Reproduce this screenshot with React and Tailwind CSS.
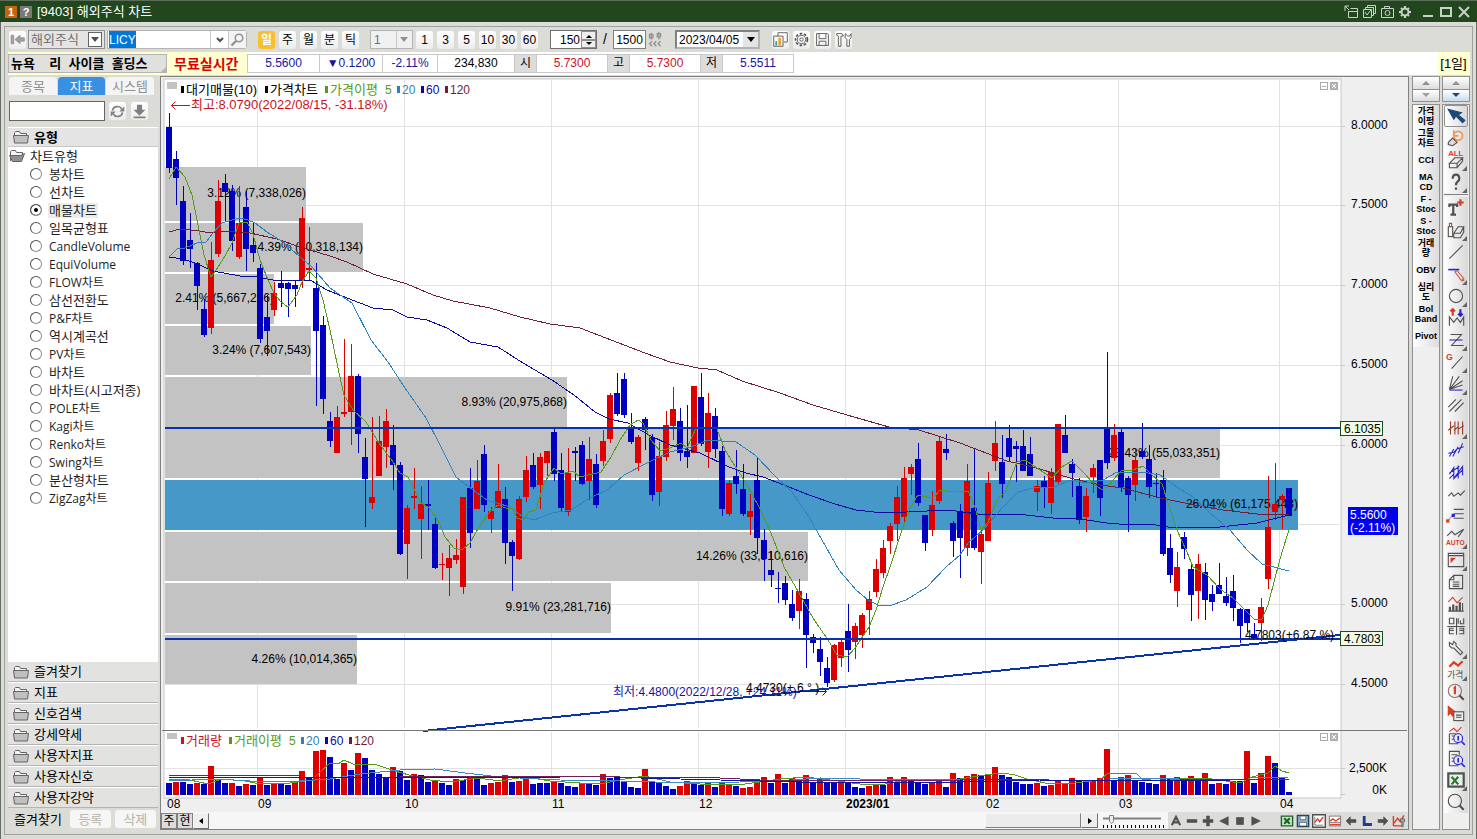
const FONT = "font-['Liberation_Sans','Noto_Sans_CJK_KR',sans-serif]"
const MALGUN = "font-['Open_Sans','Noto_Sans_CJK_KR',sans-serif]"
const btn = 'flex items-center justify-center w-[17px] h-[18px] rounded-[3px] bg-gradient-to-b from-white to-[#ececec] text-[12px] leading-none text-black flex-shrink-0'

const TYPES = [
  '봉차트', '선차트', '매물차트', '일목균형표', 'CandleVolume', 'EquiVolume', 'FLOW차트', '삼선전환도', 'P&F차트',
  '역시계곡선', 'PV차트', '바차트', '바차트(시고저종)', 'POLE차트', 'Kagi차트', 'Renko차트', 'Swing차트', '분산형차트', 'ZigZag차트',
]
const GROUPS = ['즐겨찾기', '지표', '신호검색', '강세약세', '사용자지표', '사용자신호', '사용자강약']
const SHORTCUTS = [['가격', '이평'], ['그물', '차트'], ['CCI'], ['MA', 'CD'], ['F -', 'Stoc'], ['S -', 'Stoc'], ['거래', '량'], ['OBV'], ['심리', '도'], ['Bol', 'Band'], ['Pivot']]

// направление, high, верх тела, низ тела, low (координаты y)
const CANDLES = `B113,127,168,173 B151,159,178,205 B186,201,261,265 B213,240,249,268 B262,263,286,310 B299,309,335,337 R242,260,328,334 R180,201,254,257 B174,183,192,221 B185,191,241,251
R186,223,257,259 B191,207,249,271 B222,245,253,262 B264,268,339,343 B295,317,331,356 R282,293,310,316 B271,283,288,307 B282,283,289,317 B280,285,289,307 R207,218,280,288
R227,268,270,280 B263,288,331,406 B316,325,399,414 B412,421,441,447 R406,417,453,453 R339,412,414,417 R344,376,412,445 B374,376,434,453 B438,457,479,527 R417,497,503,509
R416,441,476,476 R409,421,447,468 B425,445,465,490 B462,465,554,555 R505,508,544,579 R468,496,498,509 R486,504,519,559 B480,504,506,530 B518,524,568,569 R553,564,565,580
R545,558,568,596 R539,555,560,564 R497,497,587,594 B468,488,533,548 R460,481,509,509 B445,454,505,512 R507,511,519,533 R464,491,508,508 B487,499,543,564 B540,542,556,591
R496,499,559,560 R456,470,497,502 B453,465,487,489 R453,457,485,509 R451,451,463,476 B429,432,474,481 B453,470,508,512 R448,473,512,516 B447,451,453,481 B441,445,484,485
R437,459,481,500 B454,464,505,508 R430,441,461,466 R393,395,439,443 B373,393,414,416 B373,379,415,418 B413,427,442,444 R435,437,463,471 B417,419,430,450 B434,437,495,501
R442,456,492,506 R411,425,457,461 R387,409,426,440 B408,421,453,461 B405,451,457,468 R386,386,453,453 B373,397,444,446 R393,413,452,468 B408,416,449,458 B446,451,509,516
R480,483,514,516 B450,476,484,494 B464,489,514,516 R494,511,517,535 B457,480,538,554 B529,540,559,581 B551,570,575,587 B572,588,589,603 B576,583,600,605 B590,604,618,621
R579,591,611,629 B593,599,635,668 B634,637,643,653 B637,649,662,676 B657,668,683,687 R644,645,680,682 R638,642,658,667 B604,631,650,672 R623,626,642,659 R613,615,635,648
R591,599,610,635 R559,569,592,597 R540,548,573,578 R523,526,541,554 R486,497,524,541 R467,478,517,523 R464,467,474,495 B443,459,503,506 B515,515,543,551 R491,505,530,536
R436,441,501,504 B434,449,453,460 B521,523,541,557 B504,512,538,578 R464,481,548,556 B448,508,548,550 R529,534,552,584 R472,483,541,541 R421,443,461,471 B435,462,484,498
B425,438,457,461 B441,446,449,482 B430,446,471,471 B437,454,476,476 R480,486,492,511 B476,481,487,508 R468,472,503,514 R424,424,482,484 B415,435,453,453 B459,464,473,497
B478,486,520,524 R488,496,517,532 R464,468,477,493 B460,460,498,516 B352,428,463,469 R424,435,458,461 B429,432,487,492 B476,478,495,532 R449,460,485,501 B423,451,457,459
B445,459,487,498 B473,483,484,497 B470,480,554,556 B534,548,575,583 R552,567,591,607 B532,537,549,559 B565,569,595,621 R554,564,591,619 B563,572,600,620 B585,594,602,611
B563,585,594,594 B577,596,603,606 B575,591,608,621 B608,609,626,643 B609,609,623,632 B623,634,638,638 R598,607,623,641 R476,527,579,589 R463,504,512,520 R494,496,500,529
B488,488,516,516`.split(/\s+/).map(s => ({ up: s[0] === 'R', v: s.slice(1).split(',').map(Number) }))

const VOLUMES = `B783 R782 B782 B784 R783 B784 R766 B780 B783 R783 B786 R784 B785 R777 B785 R783 B783 B785 R782 R771
B777 R751 R750 B757 B779 R763 B770 R753 B758 B770 B774 B778 R767 B771 B780 R774 B775 B782 R780 B783
B785 R779 B780 R777 B777 B785 R783 R782 R775 B782 R781 R778 B784 B783 B783 R782 B783 B786 B787 R783
B784 B785 R774 B778 B777 B782 B787 B788 R769 B782 B783 B786 B789 R786 R781 B782 B785 R782 B787 R782
R784 B786 R788 R787 R781 R777 B783 R774 B783 R778 B780 R775 B783 R778 B782 B782 R782 B782 B787 B788
R786 R785 B785 R777 B782 R777 B781 B782 B784 R783 R781 B787 R773 B778 R776 R774 B775 R774 R767 B775
B777 B782 B784 B784 R783 B786 R785 R781 R784 R778 B780 B781 R780 R778 R749 B780 R777 R775 B780 B782
B783 B784 R775 B778 R777 B780 R776 B780 R773 B784 R783 B784 R781 B781 R751 B783 R773 R756 B763 B778
B792`.split(/\s+/)

// 매물대
const BLOCKS = [
  [167, 221, 306, '3.12% (7,338,026)'],
  [223, 272, 363, '4.39% (10,318,134)'],
  [274, 324, 274, '2.41% (5,667,266)'],
  [326, 375, 311, '3.24% (7,607,543)'],
  [377, 428, 567, '8.93% (20,975,868)'],
  [429, 478, 1220, '23.43% (55,033,351)'],
  [480, 530, 1298, '26.04% (61,175,443)'],
  [532, 581, 808, '14.26% (33,510,616)'],
  [583, 633, 611, '9.91% (23,281,716)'],
  [635, 684, 357, '4.26% (10,014,365)'],
]

const MA5 = '169,179 176,167 185,177 192,195 197,220 204,255 211,277 218,267 225,256 232,243 239,223 247,222 253,234 260,260 268,280 274,293 281,302 288,307 297,295 302,282 309,271 316,278 323,300 330,330 338,368 344,395 353,410 366,422 379,443 393,462 400,473 408,477 416,493 421,503 428,507 437,518 445,537 454,548 462,550 470,543 479,527 491,510 498,505 506,508 512,508 517,518 523,520 529,512 536,510 544,483 554,468 561,474 573,471 580,477 601,472 611,457 620,440 630,425 638,420 643,423 651,440 660,451 670,448 681,443 687,448 696,428 717,429 725,450 733,463 746,483 759,507 771,533 784,567 799,593 813,618 828,640 837,655 847,657 855,648 869,627 876,610 883,587 890,567 902,530 910,508 918,495 927,497 933,498 940,490 953,492 968,491 975,507 981,530 988,522 998,498 1005,493 1017,462 1025,460 1037,468 1052,478 1062,467 1072,461 1083,472 1093,483 1102,490 1107,487 1121,471 1133,470 1143,466 1150,473 1162,484 1168,503 1177,530 1187,552 1193,567 1207,575 1220,589 1233,598 1243,608 1254,619 1262,619 1268,605 1275,578 1282,552 1289,530'
const MA20 = '169,257 177,249 185,248 197,243 206,242 213,233 222,223 232,220 240,218 248,220 255,223 267,232 283,242 300,257 312,267 330,288 352,303 371,340 388,362 405,388 426,418 439,443 456,477 473,490 487,500 510,507 523,517 534,520 552,513 571,510 590,498 607,490 624,475 649,462 670,452 691,447 708,440 736,442 755,455 776,477 792,492 809,517 822,540 839,570 856,590 868,600 878,605 889,606 906,600 927,587 946,567 960,555 968,543 983,530 1003,507 1018,492 1037,487 1053,488 1070,480 1087,483 1103,480 1117,472 1142,472 1160,475 1177,487 1193,497 1210,513 1230,530 1247,550 1262,564 1289,571'
const MA60 = '169,257 183,259 195,263 213,271 240,276 257,277 273,280 310,280 327,290 347,298 373,308 393,310 407,317 427,320 447,328 470,342 498,347 523,363 552,380 574,395 595,412 609,419 628,423 649,435 670,445 700,453 729,467 746,473 763,477 784,485 809,495 835,504 856,510 883,513 906,512 948,510 978,514 1017,514 1053,518 1080,519 1107,523 1130,525 1150,524 1168,527 1220,527 1257,523 1289,515'
const MA120 = '169,232 180,229 200,231 210,233 227,231 250,233 277,239 300,247 330,256 347,262 373,274 407,284 433,295 453,301 490,308 520,317 550,324 580,328 611,340 645,353 670,362 698,368 717,370 742,381 780,393 813,405 847,415 889,427 919,430 960,443 973,448 1007,461 1033,467 1070,478 1100,485 1123,488 1160,498 1200,506 1223,510 1257,514 1289,514'

const VOL_MA = [
  ['#559a1a', '169,779 190,780 208,784 222,779 245,781 260,784 290,783 312,780 320,772 330,763 338,764 344,760 353,764 374,764 395,771 409,775 430,780 450,782 478,778 500,781 525,777 550,781 580,783 605,783 625,779 645,776 670,782 700,784 745,784 780,779 806,777 830,780 860,784 885,784 905,780 940,780 960,779 985,775 1002,773 1015,775 1027,779 1045,783 1075,783 1100,780 1108,773 1136,773 1142,779 1160,781 1190,778 1212,779 1240,783 1252,777 1268,773 1275,766 1282,771 1289,773'],
  ['#3a8ac8', '169,781 215,779 250,781 300,781 330,779 360,774 400,770 435,769 465,773 500,777 560,780 620,781 690,783 740,782 780,781 820,778 860,779 930,779 980,780 1040,779 1110,779 1180,778 1250,778 1289,777'],
  ['#1414a0', '169,777 270,777 330,777 410,778 470,777 560,778 640,778 720,780 800,782 860,782 960,782 1040,780 1130,780 1230,780 1289,779'],
  ['#6e1e5a', '169,775 225,775 300,776 400,776 520,776 620,777 700,777 760,780 850,780 960,780 1050,779 1180,779 1289,780'],
]

const GRID_X = [257, 404, 551, 698, 845, 985, 1118, 1279]
const PRICES = [['8.0000', 126], ['7.5000', 205], ['7.0000', 285], ['6.5000', 365], ['6.0000', 445], ['5.0000', 604], ['4.5000', 684]]
const MONTHS = [['08', 167], ['09', 258], ['10', 405], ['11', 552], ['12', 699], ['2023/01', 846], ['02', 986], ['03', 1119], ['04', 1280]]

function Legend({ items, y }) {
  return items.map(([label, x, color]) => (
    <g key={label} fill={color}>
      <rect x={x} y={y - 8} width="3" height="7" />
      <text x={x + 5} y={y} fontSize={/^\d/.test(label) ? 12 : 13}>{label}</text>
    </g>
  ))
}

function PaneButtons({ y }) {
  return (
    <g fill="none" stroke="#aaa">
      <rect x="1320.5" y={y + 0.5} width="7" height="7" />
      <path d={`M1322 ${y + 4.5}h4`} />
      <rect x="1330.5" y={y + 0.5} width="7" height="7" fill="#b4b4b4" />
      <path d={`M1332 ${y + 2}l4 4m0 -4l-4 4`} stroke="#fff" />
    </g>
  )
}

function Chart() {
  return (
    <svg viewBox="161 77 1247 735" className={`block w-full h-auto bg-[#efefef] ${FONT} text-[12px]`}>
      <rect x="164" y="79" width="1177" height="719" fill="#fff" stroke="#c8c8c8" />

      {/* Сетка */}
      <g stroke="#e2e2e2" shapeRendering="crispEdges">
        {GRID_X.map(x => <path key={x} d={`M${x + 0.5} 80V728M${x + 0.5} 732V797`} />)}
        {[126, 205, 285, 365, 445, 524, 604, 684].map(y => <path key={y} d={`M165 ${y + 0.5}H1340`} />)}
        <path d="M165 768.5H1340" />
      </g>
      <path d="M1341 126.5h4M1341 205.5h4M1341 285.5h4M1341 365.5h4M1341 445.5h4M1341 604.5h4M1341 684.5h4M1341 768.5h4M1341 794.5h4" stroke="#c8c8c8" />

      {BLOCKS.map(([y1, y2, x, label]) => (
        <g key={label}>
          <rect x="165" y={y1} width={x - 165} height={y2 - y1} fill={y1 === 480 ? '#4698c8' : '#c3c3c3'} />
          <text x={x} y={(y1 + y2) / 2 + 3} textAnchor="end">{label}</text>
        </g>
      ))}

      {/* Свечи */}
      <g shapeRendering="crispEdges">
        {CANDLES.map(({ up, v: [hi, top, bottom, lo] }, i) => (
          <g key={i} fill={up ? '#dc0000' : '#0000be'}>
            <rect x={169 + i * 7} y={hi} width="1" height={lo - hi} />
            <rect x={166 + i * 7} y={top} width="6" height={Math.max(bottom - top, 1)} />
          </g>
        ))}
      </g>

      <g fill="none" strokeWidth="1" shapeRendering="crispEdges">
        <polyline points={MA120} stroke="#6e1e3c" />
        <polyline points={MA60} stroke="#0a0aa0" />
        <polyline points={MA20} stroke="#2d82be" />
        <polyline points={MA5} stroke="#559a1a" />
      </g>

      {/* Линии пользователя */}
      <path d="M165 428H1340M165 639H1340M423 731L1340 635" stroke="#0a32aa" strokeWidth="2" fill="none" shapeRendering="crispEdges" />

      <g fill="#c8141e">
        <text x="191" y="109" fontSize="13">최고:8.0790(2022/08/15, -31.18%)</text>
        <path d="M171 105.5H190M175.5 101.5L171.5 105.5L175.5 109.5" fill="none" stroke="#c8141e" />
      </g>
      <g fill="#1414a0">
        <text x="613" y="696">최저:4.4800(2022/12/28, +24.11%)</text>
        <path d="M800 691.5H826M822.5 687.5L826.5 691.5L822.5 695.5" fill="none" stroke="#1414a0" />
      </g>
      <text x="746" y="692">4.4730(+.6 ° )</text>
      <text x="1245" y="639">4.7803(+6.87 %)</text>

      <rect x="167" y="82" width="10" height="7" fill="#c3c3c3" />
      <Legend y={94} items={[['대기매물(10)', 181, '#000'], ['가격차트', 265, '#000'], ['가격이평', 325, '#559a1a'], ['20', 397, '#2d82be'], ['60', 421, '#0a0aa0'], ['120', 445, '#6e1e3c']]} />
      <text x="385" y="94" fill="#559a1a">5</text>
      <PaneButtons y={82} />

      {/* Объём */}
      <path d="M162 730.5H1407" stroke="#787878" />
      <rect x="167" y="733" width="10" height="6" fill="#c3c3c3" />
      <Legend y={745} items={[['거래량', 181, '#c8141e'], ['거래이평', 229, '#559a1a'], ['20', 301, '#2d82be'], ['60', 325, '#0a0aa0'], ['120', 349, '#6e1e3c']]} />
      <text x="289" y="745" fill="#559a1a">5</text>
      <PaneButtons y={733} />
      <g shapeRendering="crispEdges">
        {VOLUMES.map((s, i) => (
          <rect key={i} x={166 + i * 7} y={+s.slice(1)} width="6" height={795 - s.slice(1)} fill={s[0] === 'R' ? '#dc0000' : '#0000be'} />
        ))}
        {VOL_MA.map(([color, pts]) => <polyline key={color} points={pts} fill="none" stroke={color} />)}
      </g>

      {/* Оси */}
      {PRICES.map(([p, y]) => <text key={p} x="1351" y={y + 3}>{p}</text>)}
      <text x="1387" y="772" textAnchor="end">2,500K</text>
      <text x="1387" y="794" textAnchor="end">0K</text>
      {MONTHS.map(([m, x]) => <text key={m} x={x} y="808" fontWeight={m.length > 2 ? 700 : 400}>{m}</text>)}
      <g fill="#f0ffe6" stroke="#1e4b1e" shapeRendering="crispEdges">
        <rect x="1340.5" y="421.5" width="42" height="14" />
        <rect x="1340.5" y="631.5" width="42" height="14" />
      </g>
      <text x="1344" y="433">6.1035</text>
      <text x="1344" y="643">4.7803</text>
      <rect x="1348" y="507" width="50" height="28" fill="#0000f0" />
      <g fill="#fff">
        <text x="1350" y="519">5.5600</text>
        <text x="1350" y="532">(-2.11%)</text>
      </g>
    </svg>
  )
}

const D = '#505050'
const R = '#dc3c28'
const B = '#2828c8'

// [название, рисунок 20x20, есть ли подменю]
const TOOLS = [
  ['선택', <path d="M3 4l5 9 2-3 6 6 2-2-6-5 3-2z" fill="#1e4678" stroke="#1e4678" />],
  ['되돌리기', <><circle cx="12" cy="8" r="4" stroke="#f09650" strokeWidth="1.500" /><path d="M8 3v5h4" stroke="#f09650" strokeWidth="1.500" /><path d="M3 14l4-4 4 4-4 3-4-1z" fill="#ddd" /></>],
  ['전체삭제', <><text x="3" y="6" fontSize="7" fontWeight="700" fill={R} stroke="none">ALL</text><path d="M4 13l5-5h7l-5 5zM4 13v4h7v-4M11 17l5-6v-3" /></>, 1],
  ['도움말', <path d="M7 7c0-5 6-5 6 0 0 3-3 2-3 6M10 15v2" strokeWidth="2" />, 1],
  ['글자', <><path d="M3 7h9M4 7v2M11 7v2M7.500 7v9M5 16h5" strokeWidth="2" /><path d="M11 5h6M14 2v6" stroke={R} strokeWidth="2" /></>],
  ['지우개', <><rect x="3" y="7" width="4" height="9" /><path d="M4 7V4h2v3" stroke={R} /><path d="M8 13l4-6h5l-3 6zM8 13v4h6l3-5V7" /></>, 1],
  ['직선', <path d="M4 16L16 4" />],
  ['그리기', <><path d="M3 6h10" stroke={B} strokeWidth="1.500" /><path d="M9 8l6 8 2-2-6-7zM15 16l2 0v-2" stroke="#c86450" /></>, 1],
  ['원', <circle cx="10" cy="10" r="6" />, 1],
  ['패턴', <><path d="M4 17V9l4 5 3-4 3 4 3-5v8" /><path d="M7 8V2M5 4l2-2 2 2" stroke={R} strokeWidth="2" /><path d="M14 2v6M12 6l2 2 2-2" stroke={B} strokeWidth="2" /></>],
  ['지그', <><path d="M5 5h10L6 15h11" /><path d="M4 10h12" stroke={B} /></>, 1],
  ['갠', <><text x="1" y="8" fontSize="8" fontWeight="700" fill={R} stroke="none">G</text><path d="M6 16L16 5" /></>, 1],
  ['부채꼴', <><path d="M4 15L7 3M4 15L13 3M4 15l12-8M4 15l12-4" /><path d="M4 15.500h12" stroke={B} /></>, 1],
  ['평행선', <path d="M3 11l7-7M4 15L15 4M9 15l8-8" />],
  ['주기', <path d="M5 4v12M9 4v12M12 4v12M16 4v12M3 12l5-4M8 12l4-3M12 11l5-3" stroke="#963c28" />, 1],
  ['채널', <path d="M4 16l4-7M7 16l5-9M12 13l4-9M3 13l5-1 3-3 6-2" stroke={B} />],
  ['채널2', <path d="M4 12l4-6v10l8-11v8M4 16l4-4M8 16l8-8M12 4v12M4 11l9-6" stroke={B} />],
  ['파동', <path d="M3 12l3-3 2 3 4-3 2 2 4-4" />],
  ['기준선', <><path d="M8 4h9M8 8h9M8 12h9" /><path d="M3 14L8 8" stroke="#f09650" /><rect x="1" y="13" width="3" height="3" fill={R} stroke="none" /><rect x="6" y="8" width="3" height="3" fill={B} stroke="none" /></>],
  ['자동', <><path d="M2 8l4-4 3 3 8-5-5 7" /><text x="1" y="16" fontSize="6" fontWeight="700" fill={R} stroke="none">AUTO</text></>, 1],
  ['창', <><path d="M3 4h14v12H3zM3 6h14" /><path d="M5 8h5l-5 5z" fill={R} stroke="none" /></>, 1],
  ['문서', <path d="M8 4h8v12H4V8zM8 4v4H4M7 10h6M7 12h6M7 14h6" />],
  ['지표', <><path d="M4 16v-3h1v3M7 16v-5h1v5M10 16v-4h1v4M13 16V9h1v7M16 16V9M3 16.500h14" /><path d="M3 8l4-4 4 5 5-5" stroke={R} /></>],
  ['분할', <path d="M4 3v5h4V3zM12 3v5M14 5v3h3V3M8 12H4v5h4M4 14h4M13 12h4v5h-4M13 14h4M2 10.500h16M10.500 3v15" />],
  ['설정', <path d="M4 5v3l2 2h2l6 6 2-2-6-6V6L8 4 7 7z" />, 1],
  ['가격', <><path d="M4 7l4-4 4 3 4-4" stroke={R} strokeWidth="2" /><text x="2" y="17" fontSize="8" fill={D} stroke="none">가격</text></>, 1],
  ['확대1', <><circle cx="9" cy="9" r="6" stroke="#966e6e" /><path d="M13 13l4 4" strokeWidth="2" /><path d="M8 7l1-1v6" stroke={R} strokeWidth="2" /></>],
  ['속성', <><path d="M3 3v8l2-2 2 3 1-1-1-3h2z" fill={R} stroke={R} /><rect x="8" y="8" width="9" height="8" fill="#eee" /><path d="M10 11h5M10 13h5" /></>],
  ['지표검색', <><path d="M4 6l4-3 3 3 4-4" stroke={R} /><path d="M4 8v9h8M6 10h2M6 13h2M4 8h6" /><circle cx="12" cy="12" r="4" stroke={B} /><path d="M12 10v4M15 15l3 3" stroke={B} strokeWidth="1.500" /></>],
  ['문서검색', <><path d="M12 17H4V4h9v3M6 7h5M6 10h2M6 13h2" /><circle cx="12" cy="12" r="4" stroke={B} /><path d="M12 10v4M15 15l3 3" stroke={B} strokeWidth="1.500" /></>],
  ['엑셀', <><rect x="3" y="4" width="14" height="12" fill="#e6f0e6" strokeWidth="2" /><path d="M6 7l6 7M12 7l-6 7" stroke="#287832" strokeWidth="2" /></>, 1],
  ['돋보기', <><circle cx="9" cy="9" r="6" /><path d="M13 13l4 4" strokeWidth="2" /></>],
]

function Icon({ children, size = 'w-[22px] h-[22px]' }) {
  return <svg viewBox="0 0 20 20" className={`${size} flex-shrink-0`} fill="none" stroke={D}>{children}</svg>
}

function Folder({ open }) {
  return (
    <svg viewBox="0 0 16 14" className="w-4 h-[14px] flex-shrink-0" stroke="#646464">
      <path d="M1.500 12V2.500l1-1h4l1 2h6V5" fill="#f4f4f4" />
      {open ? <path d="M.5 6.500h11l4-2-3 8h-9z" fill="#909090" /> : <path d="M.5 5.500h15l-1 7.500h-13z" fill="#c0c0c0" />}
    </svg>
  )
}

function Down({ color = 'border-t-black' }) {
  return <i className={`block w-0 h-0 border-x-4 border-x-transparent border-t-[5px] ${color}`} />
}

function TitleBar() {
  return (
    <header className="flex items-center h-[22px] px-[5px] bg-[#22461e] border-t border-[#5a6e58] text-white">
      <span className="w-[12px] h-[12px] bg-[#c8640a] text-[11px] font-bold leading-[12px] text-center">1</span>
      <span className="w-[12px] h-[12px] ml-[3px] bg-[#787878] text-[11px] font-bold leading-[12px] text-center">?</span>
      <h1 className="ml-[5px] text-[13px]">[9403] 해외주식 차트</h1>
      <div className="ml-auto flex items-center gap-[2px] text-[#c8d2c8]">
        <button aria-label="분리"><svg viewBox="0 0 16 16" className="w-4 h-4" fill="none" stroke="currentColor"><path d="M2 7V2h4M2 2l4 4M7.500 4.500h7v9h-9v-6M5 7.500h9" /></svg></button>
        <button aria-label="복사"><svg viewBox="0 0 16 16" className="w-4 h-4" fill="none" stroke="currentColor"><path d="M2.500 5.500h8v8h-8zM4.500 5V3.500h8v8H11M6.500 3V1.500h8v8H13M4 8l2 3 4-5" /></svg></button>
        <button aria-label="캡처"><svg viewBox="0 0 16 16" className="w-4 h-4" fill="none" stroke="currentColor"><path d="M2.500 4.500h12v9h-12zM5.500 4V2.500h5V4" /><circle cx="8.500" cy="9" r="2.500" /></svg></button>
        <button aria-label="설정"><svg viewBox="0 0 16 16" className="w-4 h-4" fill="none" stroke="currentColor"><circle cx="8" cy="8" r="3.500" strokeWidth="2" /><path d="M8 2v2M8 12v2M2 8h2M12 8h2M4 4l1 1M11 11l1 1M12 4l-1 1M5 11l-1 1" strokeWidth="2" /></svg></button>
        <button aria-label="최소화" className="ml-[5px]"><svg viewBox="0 0 16 16" className="w-4 h-4" stroke="currentColor" strokeWidth="2"><path d="M3 12h10" /></svg></button>
        <button aria-label="최대화"><svg viewBox="0 0 16 16" className="w-4 h-4" fill="none" stroke="currentColor" strokeWidth="2"><path d="M3 4h10v8H3z" /></svg></button>
        <button aria-label="닫기"><svg viewBox="0 0 16 16" className="w-4 h-4" stroke="currentColor" strokeWidth="2"><path d="M3 3l10 10M13 3L3 13" /></svg></button>
      </div>
    </header>
  )
}

function Toolbar() {
  return (
    <div className="flex items-center h-[25px] pl-[1px]">
      <button aria-label="처음으로" className={btn}><Icon size="w-[17px] h-[17px]"><path d="M2.500 5v10h3V5zM18 8v4h-5v3l-6-5 6-5v3z" fill="#a0a0a0" stroke="#909090" /></Icon></button>

      <div className="flex w-[77px] h-[19px] ml-[2px] border border-[#909090] bg-[#e4e4e4] items-center">
        <select aria-label="시장" className="appearance-none w-[59px] pl-[2px] text-[13px] leading-[16px] text-[#707070] outline-none"><option>해외주식</option></select>
        <span className="flex items-center justify-center w-[14px] h-[15px] border border-[#646464] bg-white"><Down color="border-t-[#505050]" /></span>
      </div>

      <div className="flex w-[140px] h-[19px] ml-[2px] border border-[#b4b4b4] rounded-r-[3px] bg-white">
        <input
          aria-label="종목코드" defaultValue="LICY" autoFocus onFocus={e => e.target.select()}
          className="w-[102px] pl-[1px] text-[12px] outline-none selection:bg-[#0078d7] selection:text-white"
        />
        <button aria-label="목록" className="flex items-center justify-center w-[18px] border-l border-[#c8c8c8]"><svg viewBox="0 0 8 6" className="w-2 h-[6px]" fill="none" stroke="#505050" strokeWidth="2"><path d="M1 1l3 3 3-3" /></svg></button>
        <button aria-label="검색" className="flex items-center justify-center w-[18px] border-l border-[#c8c8c8] bg-[#f4f4f4]"><Icon size="w-[15px] h-[15px]"><circle cx="12" cy="8" r="5" stroke="#909090" strokeWidth="2" /><path d="M8 12l-6 6" stroke="#909090" strokeWidth="3" /></Icon></button>
      </div>

      <div className="flex gap-[4px] ml-[11px]">
        <button className="flex items-center justify-center w-[17px] h-[18px] rounded-[3px] bg-[#fabe32] text-white text-[12px] font-bold leading-none">일</button>
        {['주', '월', '분', '틱'].map(p => <button key={p} className={btn}>{p}</button>)}
      </div>
      <div className="flex w-[43px] h-[19px] ml-[11px] border border-[#b4b4b4] bg-[#f0f0f0] items-center">
        <select aria-label="주기" className="appearance-none w-[26px] h-[17px] pl-[3px] text-[12px] text-[#707070] border-r border-[#c8c8c8] outline-none"><option>1</option></select>
        <span className="ml-[3px]"><Down color="border-t-[#909090]" /></span>
      </div>
      <div className="flex gap-[4px] ml-[3px]">
        {[1, 3, 5, 10, 30, 60].map(p => <button key={p} className={btn}>{p}</button>)}
      </div>

      <div className="flex w-[47px] h-[19px] ml-[12px] border border-[#707070] bg-white">
        <input aria-label="표시 개수" defaultValue="150" className="w-[29px] text-[12px] text-right outline-none" />
        <div className="flex flex-col w-[15px] ml-[1px]">
          <button aria-label="늘리기" className="h-[9px] bg-[#eee] border border-[#909090] flex items-center justify-center"><svg viewBox="0 0 6 4" className="w-[6px] h-[4px]"><path d="M0 4l3-3 3 3z" /></svg></button>
          <button aria-label="줄이기" className="h-[8px] bg-[#eee] border border-[#909090] flex items-center justify-center"><svg viewBox="0 0 6 4" className="w-[6px] h-[4px]"><path d="M0 0l3 3 3-3z" /></svg></button>
        </div>
      </div>
      <span className="w-[16px] text-center text-[14px]">/</span>
      <input aria-label="전체 개수" defaultValue="1500" className="w-[33px] h-[19px] border border-[#808080] bg-white text-[12px] text-center" />
      <button aria-label="연속조회" className="ml-[1px]"><Icon size="w-[17px] h-[17px]"><path d="M5 2v8M3 4h4v4H3zM14 1v9M12 3h4v4h-4zM6 12l-3 3 3 3M11 12l-3 3 3 3M16 12l-3 3 3 3" stroke="#909090" strokeWidth="1.500" /></Icon></button>
      <div className="flex items-center w-[85px] h-[19px] ml-[11px] border-2 border-[#808080] border-b-[#b4b4b4] border-r-[#b4b4b4] bg-white">
        <input aria-label="날짜" defaultValue="2023/04/05" className="w-[66px] pl-[2px] text-[12px] outline-none" />
        <button aria-label="달력" className="flex items-center justify-center w-[15px] h-[15px] bg-[#e4e4e4]"><Down /></button>
      </div>

      <div className="flex gap-[4px] ml-[12px]">
        <button aria-label="차트 복사" className={btn}><Icon size="w-[17px] h-[17px]"><path d="M7 6V2h11v11h-4M2 6h11v12H2z" /><path d="M5 17v-5" stroke="#28a0a0" strokeWidth="2" /><path d="M9 17V8" stroke="#f0a028" strokeWidth="3" /></Icon></button>
        <button aria-label="환경설정" className={btn}><Icon size="w-[17px] h-[17px]"><circle cx="10" cy="10" r="7" strokeWidth="2" strokeDasharray="3 2" /><circle cx="10" cy="10" r="5" /><circle cx="10" cy="10" r="2" /></Icon></button>
        <button aria-label="저장" className={btn}><Icon size="w-[17px] h-[17px]"><path d="M3 3h13l1 1v13H3zM6 3v6h8V3M6 17v-5h8v5" /></Icon></button>
        <button aria-label="도구" className={btn}><Icon size="w-[17px] h-[17px]"><path d="M2 3h6l2 3H7v12H4V6L2 5zM12 3v5l2 2v8h3v-8l2-2V3l-2 3h-2z" /></Icon></button>
      </div>
    </div>
  )
}

const QUOTES = [
  ['5.5600', 'w-[72px] text-[#1414a0]'],
  ['▼0.1200', 'w-[63px] text-[#1414a0]'],
  ['-2.11%', 'w-[55px] text-[#1414a0]'],
  ['234,830', 'w-[77px]'],
  ['시', 'w-[22px] bg-[#dcdcdc]'],
  ['5.7300', 'w-[71px] text-[#c8141e]'],
  ['고', 'w-[22px] bg-[#dcdcdc]'],
  ['5.7300', 'w-[71px] text-[#c8141e]'],
  ['저', 'w-[22px] bg-[#dcdcdc]'],
  ['5.5511', 'w-[71px] text-[#1414a0]'],
]

function QuoteRow() {
  return (
    <div className="flex items-center h-[23px] bg-white">
      <div className="flex items-center w-[239px] h-full bg-[#ffffd2]">
        <div className="flex items-end justify-between w-[159px] h-[19px] pl-[2px] border border-[#b4b4b4] bg-[#e0e0dc] text-[13px] font-bold leading-[17px] whitespace-pre">
          {'뉴욕    리  사이클  홀딩스'}
          <i className="border-l-[5px] border-l-transparent border-b-[5px] border-b-[#b4b4b4]" />
        </div>
        <strong className="ml-[7px] text-[14px] leading-[20px] text-[#dc0000]">무료실시간</strong>
      </div>
      <table className="border-collapse text-[12px] text-center">
        <tbody>
          <tr className="h-[18px]">
            {QUOTES.map(([v, cls], i) => <td key={i} className={`p-0 border border-[#c8c8c8] leading-[17px] ${cls}`}>{v}</td>)}
          </tr>
        </tbody>
      </table>
      <span className="ml-auto flex items-center justify-center w-[33px] h-full bg-[#ffffd2] text-[13px] leading-none">[1일]</span>
    </div>
  )
}

function Sidebar() {
  return (
    <aside className="flex flex-col w-[150px] mr-[2px] flex-shrink-0">
      <div className="flex gap-[1px] pt-[1px] pl-[1px]">
        <button className="w-[48px] h-[18px] rounded-t-[4px] bg-[#f4f4f4] text-[13px] leading-none text-[#909090]">종목</button>
        <button className="w-[47px] h-[18px] rounded-t-[4px] bg-[#3790e1] text-[13px] leading-none text-white">지표</button>
        <button className="w-[48px] h-[18px] rounded-t-[4px] bg-[#f4f4f4] text-[13px] leading-none text-[#909090]">시스템</button>
      </div>
      <div className="flex items-center h-[32px] pl-[1px] gap-[4px]">
        <input aria-label="지표 검색" className="w-[96px] h-[20px] border border-[#646464] bg-white text-[12px] px-1" />
        <button aria-label="새로고침" className={btn}><Icon size="w-[17px] h-[17px]"><path d="M4 9a6 6 0 0 1 11-2M16 11a6 6 0 0 1-11 2" stroke="#808080" strokeWidth="2" /><path d="M18 4v6h-6zM2 16v-6h6z" fill="#808080" stroke="none" /></Icon></button>
        <button aria-label="내려받기" className={`${btn} ml-[1px]`}><Icon size="w-[17px] h-[17px]"><path d="M7 2h6v6h4l-7 7-7-7h4zM3 16h14v2H3z" fill="#808080" stroke="none" /></Icon></button>
      </div>
      <button className="flex items-center gap-[5px] h-[20px] pl-[5px] bg-[#e4e4e4] border-t border-white border-b border-b-[#c8c8c8] text-[13px] font-bold leading-none"><Folder />유형</button>

      <div className={`flex-1 bg-white text-[#1e1e1e] ${MALGUN}`}>
        <div className="flex items-center h-[18px] pl-[1px] gap-[5px] text-[13px] leading-none"><Folder open />차트유형</div>
        {TYPES.map(t => (
          <label key={t} className={`flex items-center h-[18px] pl-[22px] gap-[6px] leading-[15px] ${/^[A-Z]/.test(t) ? 'text-[12px]' : 'text-[13px]'}`}>
            <input
              type="radio" name="chartType" defaultChecked={t === '매물차트'}
              className="appearance-none w-[12px] h-[12px] rounded-full border border-[#505050] border-b-[#909090] border-r-[#909090] bg-white checked:bg-black checked:shadow-[inset_0_0_0_3px_white]"
            />
            <span className={t === '매물차트' ? 'px-[1px] bg-[#ececec]' : 'px-[1px]'}>{t}</span>
          </label>
        ))}
      </div>

      {GROUPS.map(g => (
        <button key={g} className="flex items-center gap-[5px] h-[21px] pl-[5px] bg-[#e2e2e0] border-t border-white border-b border-b-[#b4b4b4] text-[13px] leading-none"><Folder />{g}</button>
      ))}
      <div className="flex items-center h-[22px] pl-[6px] text-[13px] leading-none">
        즐겨찾기
        <button className="w-[41px] h-[18px] ml-[8px] rounded-[3px] bg-[#f6f6f6] text-[#b4b4aa]">등록</button>
        <button className="w-[41px] h-[18px] ml-[4px] rounded-[3px] bg-[#f6f6f6] text-[#b4b4aa]">삭제</button>
      </div>
    </aside>
  )
}

const small = 'flex items-center justify-center w-4 h-4 flex-shrink-0'

function BottomBar() {
  return (
    <div className="flex items-center flex-1 min-h-[17px] bg-[#f6f6f6]">
      <button className="w-[16px] h-[16px] border border-[#808080] bg-[#dcdcdc] text-[12px] leading-none">주</button>
      <button className="w-[16px] h-[16px] border border-[#808080] bg-[#dcdcdc] text-[12px] leading-none">현</button>
      <button aria-label="왼쪽" className="flex items-center justify-center w-[16px] h-[16px] border border-[#f4f4f4] border-r-[#707070] border-b-[#707070] bg-[#eee]"><svg viewBox="0 0 4 6" className="w-1 h-[6px]"><path d="M4 0v6L0 3z" /></svg></button>
      <div className="flex flex-1 justify-end"><div className="w-[96px] h-[15px] border border-[#f8f8f8] border-r-[#808080] border-b-[#808080] bg-[#ececec]" /></div>
      <button aria-label="오른쪽" className="flex items-center justify-center w-[17px] h-[15px] border border-[#f4f4f4] border-r-[#707070] border-b-[#707070] bg-[#eee]"><svg viewBox="0 0 4 6" className="w-1 h-[6px]"><path d="M0 0v6l4-3z" /></svg></button>
      <svg viewBox="0 0 70 16" className="w-[70px] h-4 flex-shrink-0" fill="none" stroke="#000">
        <path d="M5 5.500h58" stroke="#808080" strokeWidth="2" />
        <path d="M11.500 2.500h4v6l-2 2-2-2z" fill="#eee" stroke="#808080" />
        <path d="M5 13.500h62" strokeWidth="3" strokeDasharray="1 3" />
      </svg>
      <div className="flex items-center h-full pr-[1px] bg-[#dcdcda]">
        {[
          <path d="M4 16L10 4l6 12M6 12h8" strokeWidth="3" />,
          <path d="M3 8h14v4H3z" fill={D} />,
          <path d="M8 3h4v5h5v4h-5v5H8v-5H3V8h5z" fill={D} />,
          <path d="M16 4v12L4 10z" fill={D} />,
          <path d="M5 5h10v10H5z" fill={D} />,
          <path d="M4 4v12l12-6z" fill={D} />,
        ].map((d, i) => <button key={i} aria-label="탐색" className={small}><Icon size="w-[14px] h-[14px]">{d}</Icon></button>)}
        <span className="w-[15px]" />
        {[
          <><path d="M2 3h16v14H2z" fill="#c8e6c8" stroke="#1e6428" strokeWidth="2" /><path d="M6 6l8 8M14 6l-8 8" stroke="#1e6428" strokeWidth="3" /></>,
          <><path d="M2 2h16v16H2z" fill="#8cb4d2" stroke="#28465a" strokeWidth="2" /><path d="M6 3h8v5H6zM5 12h10v5H5z" fill="#fff" /></>,
          <><path d="M1 1h18v18H1z" fill="#fff" strokeWidth="2" /><path d="M4 12l4-5 3 4 5-7" stroke={R} strokeWidth="2" /><path d="M4 4v12h12" /></>,
          <><path d="M2 3h16v14H2z" fill="#fff" /><path d="M3 10l4-3 4 3 6-4M3 15h14" stroke={R} strokeWidth="2" /><path d="M2 12h16" /></>,
          <path d="M3 10l6-6v4h8v4H9v4z" fill={D} />,
          <path d="M6 3v12h11" stroke="#1e3c8c" strokeWidth="4" />,
          <path d="M17 10l-6-6v4H3v4h8v4z" fill={D} />,
          <><path d="M2 17V3M2 17h12M3 13l5-7 4 5 5-9" stroke={R} strokeWidth="2" /><path d="M12 7h6v4h-2v7h-2v-7h-2z" fill="#8cb4b4" /></>,
        ].map((d, i) => <button key={i} aria-label="차트 도구" className={small}><Icon size="w-[14px] h-[14px]">{d}</Icon></button>)}
      </div>
    </div>
  )
}

function Scroller({ active }) {
  return (
    <div className="flex flex-col h-[26px] border border-[#909090] bg-[#909090] gap-[1px]">
      <button aria-label="위로" className="flex flex-1 items-center justify-center bg-gradient-to-b from-white to-[#dcdcdc]"><i className="border-x-4 border-x-transparent border-b-4 border-b-[#909090]" /></button>
      <button aria-label="아래로" className={`flex flex-1 items-center justify-center bg-gradient-to-b from-white ${active ? 'to-[#c8dcf0]' : 'to-[#dcdcdc]'}`}><i className={`border-x-4 border-x-transparent border-t-4 ${active ? 'border-t-[#28466e]' : 'border-t-[#a0a0a0]'}`} /></button>
    </div>
  )
}

export default function App() {
  return (
    <div className={`flex flex-col min-h-screen bg-[#dcdcd6] text-black ${FONT}`}>
      <TitleBar />
      <main className="flex flex-col flex-1 border-x border-[#646e64] border-b px-[3px] pt-[4px] pb-[4px]">
        <div className="flex flex-col flex-1 border border-[#a0a0a0] pl-[3px] pr-[2px] pb-[4px]">
          <Toolbar />
          <QuoteRow />
          <div className="flex flex-1 pt-[1px]">
            <Sidebar />
            <section className="flex flex-col flex-1 min-w-0 border border-[#808080]">
              <Chart />
              <BottomBar />
            </section>

            <div className="flex flex-col w-[28px] ml-[3px] gap-[2px] flex-shrink-0">
              <Scroller />
              <div className="flex-1 border border-[#909090] bg-[#efefef]">
                {SHORTCUTS.map(lines => (
                  <button key={lines.join('')} className="flex flex-col items-center justify-center w-full h-[22px] bg-gradient-to-r from-white to-[#dcdcdc] text-[9px] font-bold leading-[10px]">
                    {lines.map(l => <span key={l}>{l}</span>)}
                  </button>
                ))}
              </div>
            </div>

            <div className="flex flex-col w-[28px] ml-[2px] gap-[2px] flex-shrink-0">
              <Scroller active />
              <div className="flex-1 border border-[#909090] bg-[#efefef] px-[1px]">
                {TOOLS.map(([name, icon, menu], i) => (
                  <button
                    key={name} aria-label={name}
                    className={`relative flex items-center justify-center w-full h-[22px] bg-gradient-to-r from-white to-[#d8d8d8] ${i === 0 ? 'border border-[#909090] rounded-[2px]' : ''} ${i === 4 ? 'mt-[4px]' : ''}`}
                  >
                    {i === 4 && <i className="absolute -top-[3px] left-0 right-0 h-[1px] bg-[#808080]" />}
                    <Icon>{icon}</Icon>
                    {menu && <i className="absolute right-[1px] bottom-0 border-l-[5px] border-l-transparent border-b-[5px] border-b-[#646464]" />}
                  </button>
                ))}
              </div>
            </div>
          </div>
        </div>
      </main>
    </div>
  )
}
